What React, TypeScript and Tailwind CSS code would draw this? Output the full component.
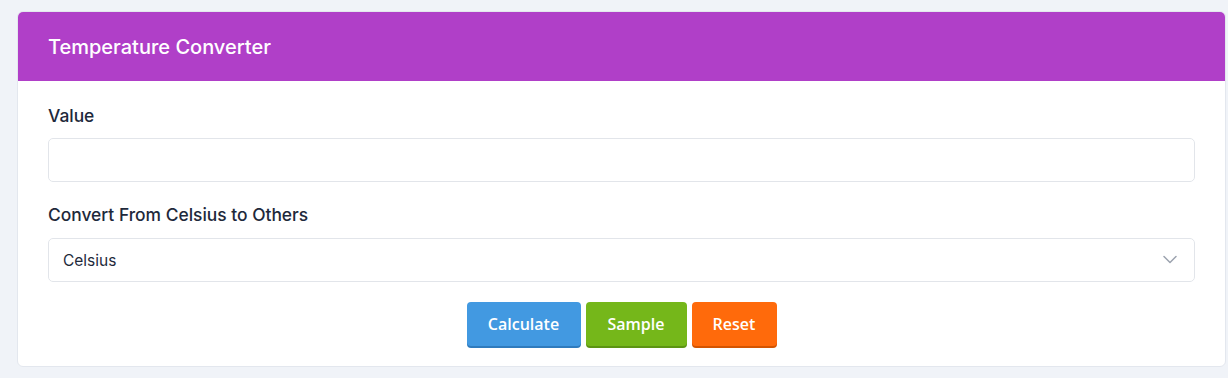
const App = () => {
  return (
    <div className="min-h-[378px] bg-[#f0f3f8] pt-[11px] pl-[17px] pr-[2px] font-['Inter',sans-serif]">
      <div className="rounded-md border border-[#e3e7ee] bg-white overflow-hidden">
        <div className="h-[69px] bg-[#b03fc8] px-[30px] flex items-center">
          <h1 className="text-[20px] font-medium text-white">Temperature Converter</h1>
        </div>
        <div className="px-[30px] pt-[23px] pb-[20px]">
          <div className="mb-[21px]">
            <label className="block text-[17.4px] leading-6 font-medium text-[#1e293b] mb-[10px]">Value</label>
            <input
              type="text"
              className="block w-full h-[44px] rounded-[5px] border border-[#e2e5ea] bg-white px-4 text-[16px] outline-none"
            />
          </div>
          <div className="mb-5">
            <label className="block text-[17.4px] leading-6 font-medium text-[#1e293b] mb-[11px]">Convert From Celsius to Others</label>
            <div className="relative h-[44px] rounded-[5px] border border-[#e2e5ea] bg-white flex items-center px-[14px] pt-[2px]">
              <span className="text-[15.5px] text-[#1e293b]">Celsius</span>
              <svg
                className="absolute right-[17px] top-[16px]"
                width="14"
                height="9"
                viewBox="0 0 14 9"
                fill="none"
                stroke="#9ca3af"
                strokeWidth="1.5"
                strokeLinecap="round"
                strokeLinejoin="round"
              >
                <polyline points="1,1.5 7,7.5 13,1.5" />
              </svg>
            </div>
          </div>
          <div className="flex justify-center gap-[5px] font-['Open_Sans',sans-serif]">
            <button className="h-[44px] w-[114px] rounded-[4px] bg-[#4299e1] text-white text-[16px] font-semibold shadow-[0_2px_0_#2f7bbd]">Calculate</button>
            <button className="h-[44px] w-[101px] rounded-[4px] bg-[#75b71a] text-white text-[16px] font-semibold shadow-[0_2px_0_#5c9412]">Sample</button>
            <button className="h-[44px] w-[85px] rounded-[4px] bg-[#ff6a0b] text-white text-[16px] font-semibold shadow-[0_2px_0_#d45400]">Reset</button>
          </div>
        </div>
      </div>
    </div>
  );
};

export default App;
